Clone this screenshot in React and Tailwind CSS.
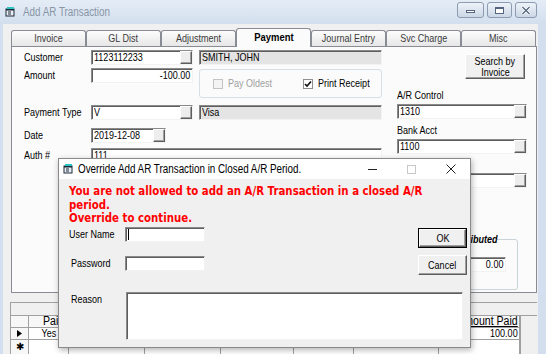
import React from 'react';

const sunken =
  'border border-t-[#8a8a8a] border-l-[#8a8a8a] border-r-[#f2f2f2] border-b-[#f2f2f2] shadow-[inset_1px_1px_0_#5e5e5e]';
const raised =
  'border border-t-white border-l-white border-r-[#5e5e5e] border-b-[#5e5e5e] shadow-[inset_-1px_-1px_0_#a0a0a0]';

// the screenshot is squeezed sideways, so text is narrowed to match
const T = ({ children, o = 'origin-left', className = 'scale-x-[0.82]' }) => (
  <span className={`inline-block whitespace-nowrap ${o} ${className}`}>{children}</span>
);

const Field = ({ className = '', gray = false, right = false, lookup = false, children }) => (
  <div className={`flex h-[15px] ${sunken} ${gray ? 'bg-[#e4e4e4]' : 'bg-white'} ${className}`}>
    <div className={`flex-1 flex px-[2px] leading-[13px] overflow-hidden ${right ? 'justify-end' : ''}`}>
      {children && <T o={right ? 'origin-right' : 'origin-left'}>{children}</T>}
    </div>
    {lookup && <div className={`w-[12px] bg-[#ededed] ${raised}`} />}
  </div>
);

const Label = ({ children, className = '' }) => (
  <div className={`w-[67px] shrink-0 leading-[13px] ${className}`}>
    <T>{children}</T>
  </div>
);

const Check = ({ checked = false, disabled = false }) => (
  <div
    className={`w-[10px] h-[10px] shrink-0 border flex items-center justify-center ${
      disabled ? 'border-[#c4c4c4] bg-[#f4f4f4]' : 'border-[#8e8f8f] bg-white'
    }`}
  >
    {checked && (
      <svg width="8" height="8" viewBox="0 0 8 8">
        <path d="M1 4 L3 6 L7 1.5" fill="none" stroke="#111" strokeWidth="1.6" />
      </svg>
    )}
  </div>
);

const tabs = ['Invoice', 'GL Dist', 'Adjustment', 'Payment', 'Journal Entry', 'Svc Charge', 'Misc'];
const cols = [18, 40, 76, 76, 73, 60, 85, 81];
const colW = ['w-[18px]', 'w-[40px]', 'w-[76px]', 'w-[76px]', 'w-[73px]', 'w-[60px]', 'w-[85px]', 'w-[81px]'];

const WinIcon = () => (
  <svg width="11" height="10" viewBox="0 0 11 10">
    <rect x="0.5" y="1.5" width="9" height="8" fill="#1d2a3a" />
    <rect x="1.5" y="3.5" width="7" height="5" fill="#e9eef4" />
    <rect x="2" y="0" width="7" height="2" fill="#2fc4c4" />
    <path d="M3 5 L6 5 M3 7 L6 7" stroke="#1d2a3a" strokeWidth="1" />
  </svg>
);

const CapBtn = ({ className = '', children }) => (
  <div
    className={`h-[16px] rounded-[3px] border border-[#8c9bb0] bg-gradient-to-b from-[#eef3f9] to-[#cbd7e6] flex items-center justify-center ${className}`}
  >
    {children}
  </div>
);

export default function App() {
  return (
    <div className="w-[546px] h-[354px] overflow-hidden relative bg-[#cfdbeb] text-black text-[11px] font-['Liberation_Sans',Arial,sans-serif]">
      {/* title bar */}
      <div className="h-[24px] flex items-center pl-[5px] pr-[9px] bg-gradient-to-b from-[#e4ecf6] to-[#d3dfee]">
        <WinIcon />
        <div className="ml-[7px] text-[12px] text-[#8895a5]">
          <T>Add AR Transaction</T>
        </div>
        <div className="ml-auto flex gap-[3px] -mt-[4px]">
          <CapBtn className="w-[27px]">
            <div className="w-[9px] h-[3px] border border-[#55657c] bg-white mt-[3px]" />
          </CapBtn>
          <CapBtn className="w-[25px]">
            <div className="w-[9px] h-[7px] border border-[#55657c] bg-white border-t-2" />
          </CapBtn>
          <CapBtn className="w-[22px]">
            <svg width="10" height="9" viewBox="0 0 10 9">
              <path d="M1.5 1 L8.5 8 M8.5 1 L1.5 8" stroke="#fff" strokeWidth="3" />
              <path d="M1.5 1 L8.5 8 M8.5 1 L1.5 8" stroke="#55657c" strokeWidth="1.3" />
            </svg>
          </CapBtn>
        </div>
      </div>

      <div className="flex h-[330px]">
        <div className="w-[3px] bg-[#d3dfee]" />
        <div className="flex-1 bg-[#f0f0f0] flex flex-col">
          {/* tab strip */}
          <div className="mt-[4px] ml-[8px] h-[18px] flex items-end">
            {tabs.map((t) =>
              t === 'Payment' ? (
                <div
                  key={t}
                  className="w-[75px] h-[19px] -mb-px relative z-10 border border-b-0 border-[#898c95] rounded-t-[3px] bg-[#fbfbfb] flex items-center justify-center font-bold text-[11.5px]"
                >
                  <T o="origin-center">{t}</T>
                </div>
              ) : (
                <div
                  key={t}
                  className="w-[75px] h-[16px] border border-b-0 border-[#898c95] rounded-t-[3px] bg-gradient-to-b from-[#fdfdfd] to-[#e6e6e6] flex items-center justify-center text-[#3c3c3c]"
                >
                  <T o="origin-center">{t}</T>
                </div>
              )
            )}
          </div>

          {/* tab page */}
          <div className="ml-[8px] w-[526px] h-[248px] border border-[#898c95] bg-[#fbfbfb] flex">
            {/* left block */}
            <div className="pl-[12px] pt-[3px] flex flex-col w-[371px]">
              <div className="flex items-center">
                <Label>Customer</Label>
                <Field className="w-[102px]" lookup>1123112233</Field>
                <Field className="w-[183px] ml-[6px]" gray>SMITH, JOHN</Field>
              </div>
              <div className="flex items-start mt-[3px]">
                <Label className="mt-[1px]">Amount</Label>
                <Field className="w-[102px]" right>-100.00</Field>
                <div className="w-[183px] h-[29px] ml-[6px] mt-[1px] border border-[#d5dfe5] rounded-[3px] flex items-center">
                  <div className="ml-[13px] w-[90px] flex items-center gap-[5px] text-[#a0a0a0]">
                    <Check disabled />
                    <T>Pay Oldest</T>
                  </div>
                  <div className="flex items-center gap-[5px]">
                    <Check checked />
                    <T>Print Receipt</T>
                  </div>
                </div>
              </div>
              <div className="flex items-center mt-[7px]">
                <Label>Payment Type</Label>
                <Field className="w-[102px]" lookup>V</Field>
                <Field className="w-[183px] ml-[6px]" gray>Visa</Field>
              </div>
              <div className="flex items-center mt-[8px]">
                <Label>Date</Label>
                <Field className="w-[75px]" lookup>2019-12-08</Field>
              </div>
              <div className="flex items-center mt-[5px]">
                <Label>Auth #</Label>
                <Field className="w-[291px]">111</Field>
              </div>
            </div>

            {/* right block */}
            <div className="ml-[14px] w-[130px] flex flex-col">
              <div
                className={`mt-[7px] ml-[68px] w-[60px] h-[25px] bg-[#f0f0f0] ${raised} flex flex-col items-center justify-center leading-[11px]`}
              >
                <T o="origin-center">Search by</T>
                <T o="origin-center">Invoice</T>
              </div>
              <div className="mt-[10px] leading-[13px]">
                <T>A/R Control</T>
              </div>
              <Field className="mt-[2px] w-[130px]" lookup>1310</Field>
              <div className="mt-[5px] leading-[13px]">
                <T>Bank Acct</T>
              </div>
              <Field className="mt-[2px] w-[130px]" lookup>1100</Field>
              <div className="mt-[4px] h-[13px]" />
              <Field className="mt-[2px] w-[130px]" lookup></Field>
              <fieldset className="mt-[45px] ml-[33px] w-[88px] h-[57px] border border-[#c9d3da] rounded-[3px] pl-[6px] pr-[11px]">
                <legend className="w-[60px] pl-[2px] font-bold italic leading-[13px]">
                  <T>Undistributed</T>
                </legend>
                <Field className="mt-[11px] ml-auto w-[58px] h-[13px]" right>0.00</Field>
              </fieldset>
            </div>
          </div>

          {/* grid */}
          <div className="mt-[9px] ml-[7px] w-[527px] flex-1 border-t border-l border-[#a0a0a0] bg-[#f0f0f0] flex flex-col">
            <div className="h-[12px]" />
            <div className="flex flex-1">
              <div className="w-[509px] bg-white border-t border-[#a0a0a0]">
                <div className="flex h-[12px] border-b border-[#a0a0a0] bg-[#f7f7f7] text-[12px]">
                  {cols.map((c, i) => (
                    <div
                      key={i}
                      className={`${colW[i]} flex border-r border-[#a0a0a0] leading-[11px] ${i === 7 ? 'justify-end pr-[1px]' : ''} ${i === 1 ? 'pl-[14px]' : ''}`}
                    >
                      {i === 1 && <T className="scale-x-[0.88]">Paid</T>}
                      {i === 7 && <T o="origin-right" className="scale-x-[0.88] underline">Amount Paid</T>}
                    </div>
                  ))}
                </div>
                <div className="flex h-[12px] border-b border-[#a0a0a0]">
                  {cols.map((c, i) => (
                    <div
                      key={i}
                      className={`${colW[i]} border-r border-[#a0a0a0] leading-[11px] overflow-hidden flex items-center ${i === 0 ? 'bg-[#f7f7f7] justify-center' : ''} ${i === 1 ? 'justify-center' : ''} ${i === 7 ? 'justify-end pr-[1px]' : ''}`}
                    >
                      {i === 0 && (
                        <svg width="5" height="7" viewBox="0 0 5 7">
                          <path d="M0 0 L5 3.5 L0 7 Z" fill="#000" />
                        </svg>
                      )}
                      {i === 1 && <T o="origin-center">Yes</T>}
                      {i === 7 && <T o="origin-right">100.00</T>}
                    </div>
                  ))}
                </div>
                <div className="flex h-[14px]">
                  {cols.map((c, i) => (
                    <div
                      key={i}
                      className={`${colW[i]} border-r border-[#a0a0a0] flex items-center justify-center ${i === 0 ? 'bg-[#f7f7f7]' : ''}`}
                    >
                      {i === 0 && <span className="text-[10px] leading-[10px]">✱</span>}
                    </div>
                  ))}
                </div>
              </div>
              <div className="flex-1 border-t border-l border-[#a0a0a0] bg-[#f0f0f0]" />
            </div>
          </div>
        </div>
        <div className="w-[8px] bg-[#d3dfee]" />
      </div>

      {/* override dialog */}
      <div className="absolute left-[58px] top-[158px] w-[413px] h-[190px] border border-[#8a8a8a] bg-[#f0f0f0] shadow-[1px_2px_6px_rgba(0,0,0,0.3)] flex flex-col">
        <div className="h-[20px] bg-white flex items-center">
          <div className="ml-[4px]">
            <WinIcon />
          </div>
          <div className="ml-[4px] text-[12px]">
            <T>Override Add AR Transaction in Closed A/R Period.</T>
          </div>
          <div className="ml-auto flex h-full">
            <div className="w-[39px] flex items-center justify-center">
              <div className="w-[9px] h-px bg-[#222]" />
            </div>
            <div className="w-[39px] flex items-center justify-center">
              <div className="w-[9px] h-[9px] border border-[#c8c8c8]" />
            </div>
            <div className="w-[39px] flex items-center justify-center">
              <svg width="10" height="10" viewBox="0 0 10 10">
                <path d="M0.5 0.5 L9.5 9.5 M9.5 0.5 L0.5 9.5" stroke="#222" strokeWidth="1" />
              </svg>
            </div>
          </div>
        </div>

        <div className="pl-[10px] pr-[3px] pt-[6px] flex flex-col">
          <div className="text-[#ff0000] font-bold text-[12px] leading-[13.7px] font-['DejaVu_Sans',sans-serif] flex flex-col">
            <div>
              <T className="scale-x-[0.85]">You are not allowed to add an A/R Transaction in a closed A/R</T>
            </div>
            <div>
              <T className="scale-x-[0.85]">period.</T>
            </div>
            <div>
              <T className="scale-x-[0.85]">Override to continue.</T>
            </div>
          </div>

          <div className="flex mt-[1px]">
            <div className="flex flex-col">
              <div className="flex items-center">
                <div className="w-[56px] leading-[13px]">
                  <T>User Name</T>
                </div>
                <div className={`w-[80px] h-[15px] bg-white ${sunken} flex items-center pl-[2px]`}>
                  <div className="w-px h-[11px] bg-black" />
                </div>
              </div>
              <div className="flex items-center mt-[14px]">
                <div className="w-[56px] pl-[2px] leading-[13px]">
                  <T>Password</T>
                </div>
                <div className={`w-[80px] h-[15px] bg-white ${sunken}`} />
              </div>
            </div>
            <div className="ml-auto flex flex-col">
              <div className="mt-[1px] w-[49px] h-[20px] border border-black bg-[#f0f0f0] flex">
                <div className={`flex-1 ${raised} flex items-center justify-center`}>
                  <T o="origin-center">OK</T>
                </div>
              </div>
              <div className={`mt-[7px] w-[49px] h-[20px] bg-[#f0f0f0] ${raised} flex items-center justify-center`}>
                <T o="origin-center">Cancel</T>
              </div>
            </div>
          </div>

          <div className="flex items-start mt-[17px]">
            <div className="w-[57px] pl-[2px] pt-[1px] leading-[13px]">
              <T>Reason</T>
            </div>
            <div className={`w-[337px] h-[48px] bg-white ${sunken}`} />
          </div>
        </div>
      </div>
    </div>
  );
}
